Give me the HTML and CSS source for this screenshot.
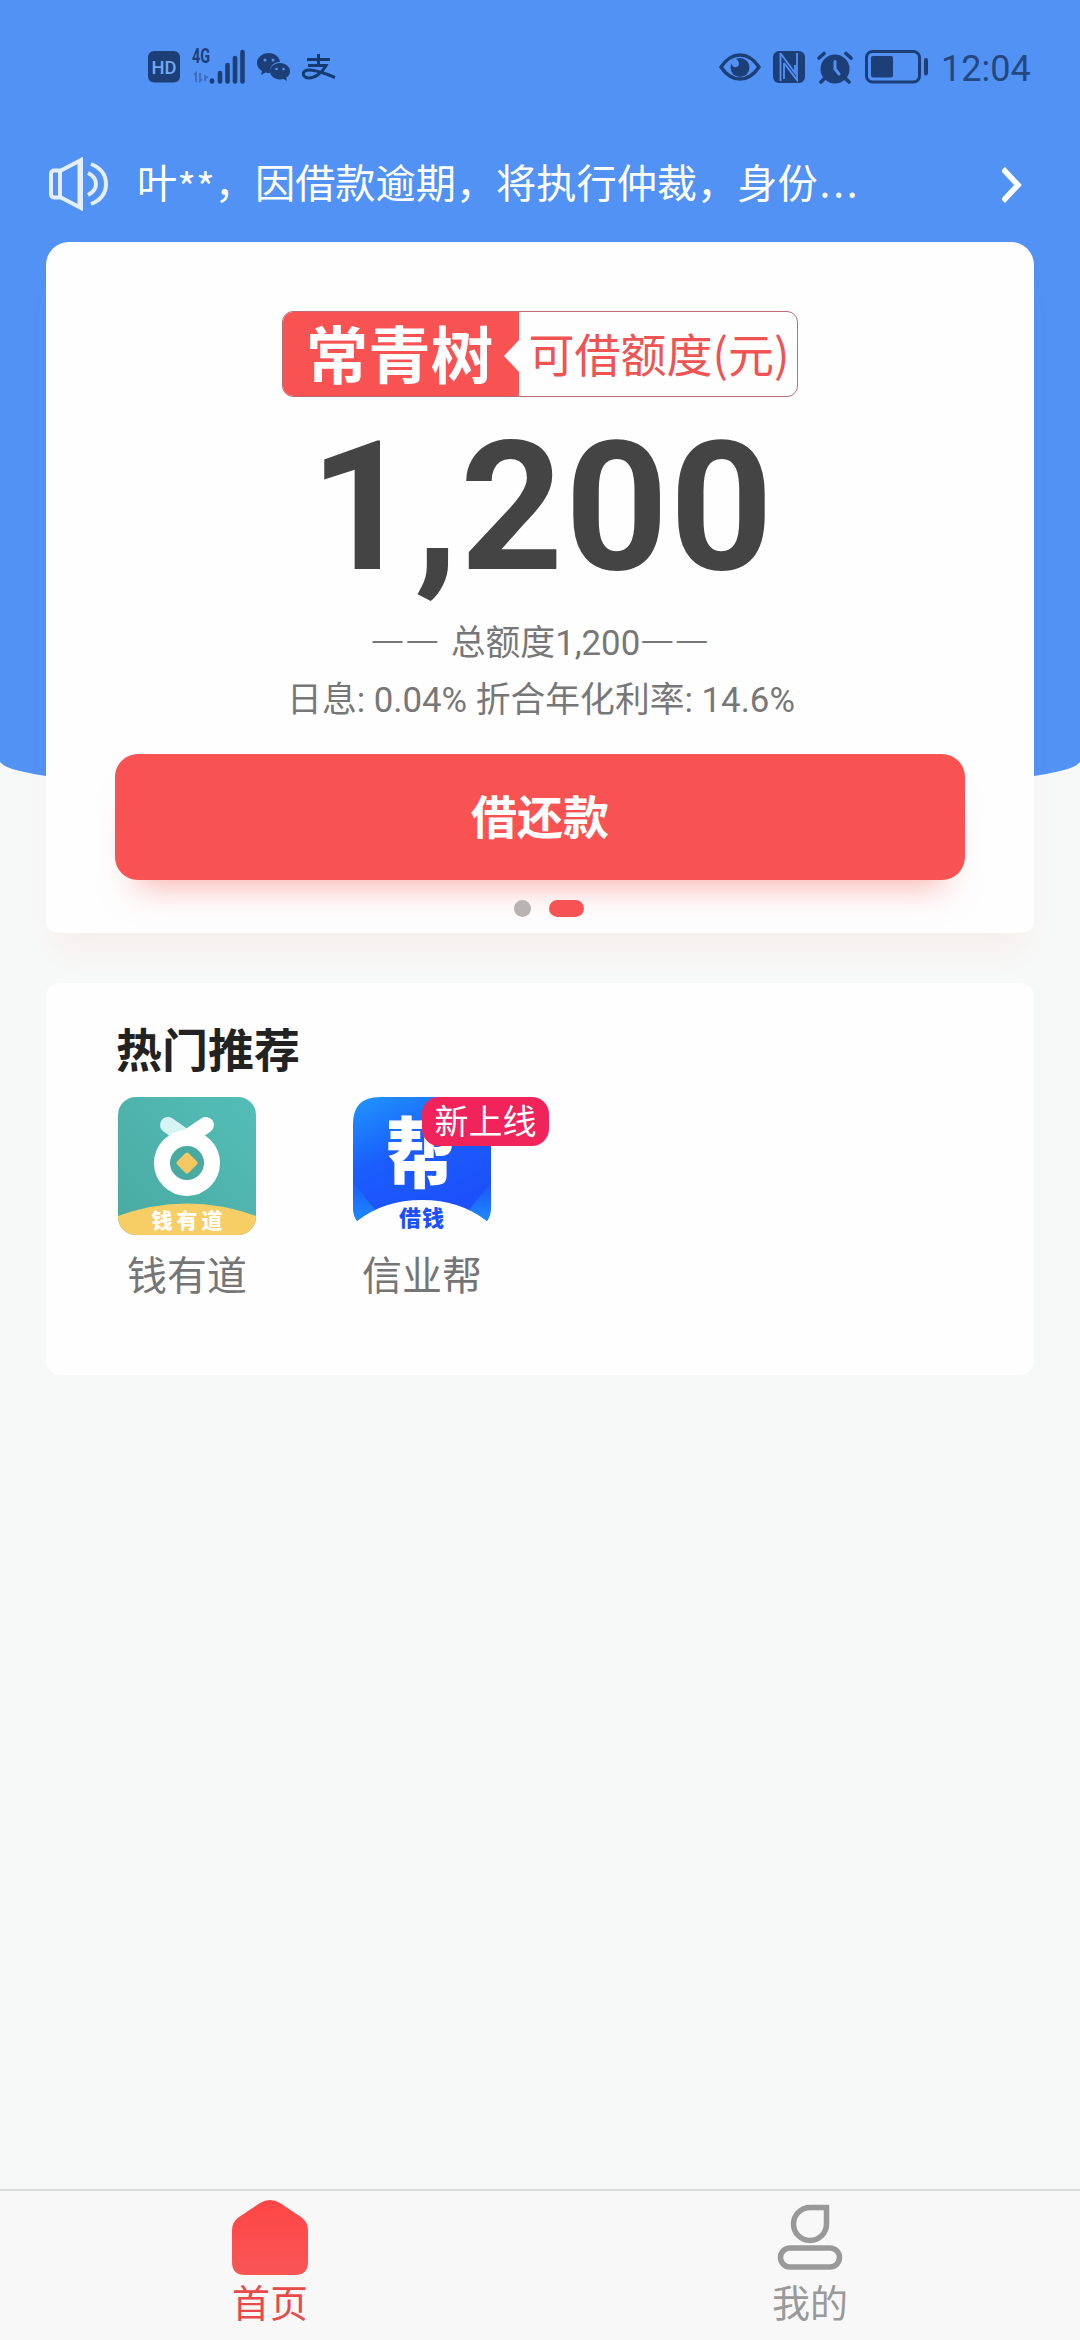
FILE: index.html
```html
<!DOCTYPE html>
<html lang="zh-CN">
<head>
<meta charset="utf-8">
<title>首页</title>
<link rel="stylesheet" href="styles.css">
</head>
<body>
<div class="page">
  <svg class="backdrop" viewBox="0 0 1080 790" aria-hidden="true"><path fill="#5292f5" d="M0 0H1080V762Q1075 768 1060 771Q1048 774 1034 776Q800 790 540 790Q280 790 46 776Q32 774 20 771Q5 768 0 762Z"/></svg>

  <header class="status">
    <div class="status-left">
      <svg width="33" height="32" viewBox="0 0 33 32"><rect width="32" height="31.500" rx="6" fill="#1d3f78"/><text x="16" y="23" text-anchor="middle" class="hd" textLength="25" lengthAdjust="spacingAndGlyphs">HD</text></svg>
      <svg class="signal" width="54" height="40" viewBox="0 -4 54 40"><text x="0" y="13" class="net" textLength="18" lengthAdjust="spacingAndGlyphs">4G</text><g stroke="#1d3f78" stroke-width="4.600" stroke-linecap="round"><path d="M20 30.500V31.500M28 23V31.500M35.500 15V31.500M43 8V31.500M50.500 2V31.500"/></g><path d="M4 32V23l-2 2M8 23v8l2-2M13 25v6M13 28l3-1" stroke="#3d70bd" stroke-width="2" fill="none"/></svg>
      <svg class="wechat" width="34" height="30" viewBox="0 0 34 30"><path fill="#1d3f78" d="M12 1C5 1 0 5.500 0 11c0 3.500 2 6.200 5 8l-1 4 4.500-2.500c1.500.400 3 .500 4.500.500C12 14.500 16.500 10 23 10 22.500 5 18 1 12 1Z"/><path fill="#1d3f78" d="M23 11c-5.800 0-10 3.700-10 8.300S17.200 27.500 23 27.500c1.300 0 2.500-.200 3.500-.500l3.500 2-.800-3.200c2.300-1.500 3.800-3.800 3.800-6.500C33 14.700 28.800 11 23 11Z"/><g fill="#5292f5"><circle cx="8" cy="8" r="1.500"/><circle cx="16" cy="8" r="1.500"/><circle cx="19.500" cy="17" r="1.300"/><circle cx="26.500" cy="17" r="1.300"/></g></svg>
      <svg class="alipay" width="34" height="27" viewBox="0 0 34 27"><g fill="none" stroke="#143b70" stroke-width="3"><path d="M5 5.500H28M16.500 0V11M6 11.500H24C20 19 13 24 7 24C1 24 0 19 3 17C8 14 20 18 33 23.500"/></g></svg>
    </div>
    <div class="status-right">
      <svg width="42" height="28" viewBox="0 0 42 28"><path d="M2 14Q10 2 21 2T40 14Q32 26 21 26T2 14Z" fill="none" stroke="#1d3f78" stroke-width="3.400"/><circle cx="21" cy="14.500" r="9.500" fill="#1d3f78"/><path d="M12 10C13 15 19 16 20 11C20 8 18 6 16 6Z" fill="#5292f5"/></svg>
      <svg width="32" height="32" viewBox="0 0 32 32"><rect width="32" height="32" rx="6" fill="#1d3f78"/><path d="M7.500 2V30M8 3L22 22V14M11 12L24 29V2M11 12V28" fill="none" stroke="#5292f5" stroke-width="1.800"/></svg>
      <svg width="36" height="33" viewBox="0 0 36 33"><circle cx="18" cy="18" r="14.500" fill="#1d3f78"/><path d="M2 7L7 2.500M34 7L29 2.500M7 28L4 31M29 28L32 31" stroke="#1d3f78" stroke-width="3.600" stroke-linecap="round"/><path d="M18 10.500V18L22 23" fill="none" stroke="#5292f5" stroke-width="3" stroke-linecap="round"/></svg>
      <svg class="battery" width="64" height="34" viewBox="0 0 64 34"><rect x="1.500" y="1.500" width="53" height="30.500" rx="6" fill="none" stroke="#1d3f78" stroke-width="3"/><rect x="6" y="6" width="22" height="21.500" rx="2" fill="#1d3f78"/><rect x="59" y="8" width="4" height="17.500" rx="2" fill="#1d3f78"/></svg>
      <span class="clock">12:04</span>
    </div>
  </header>

  <div class="notice">
    <svg width="60" height="54" viewBox="0 0 60 54" fill="none" stroke="#e3efff" stroke-width="4"><path d="M12 13.500H5a3 3 0 0 0-3 3V37.500a3 3 0 0 0 3 3H12M11 13V41M11 14L32 3V51L11 40"/><path d="M31 3V51" stroke-width="5"/><path d="M39 16Q47 20 47 27T39 38M42 7Q57 13 57 27T42 47"/></svg>
    <p class="notice-text">叶<span class="mask">**</span>，因借款逾期，将执行仲裁，身份<span class="more">...</span></p>
    <svg width="20" height="38" viewBox="0 0 20 38" fill="none" stroke="#fff" stroke-width="5.500"><path d="M1 3L16 19L1 35"/></svg>
  </div>

  <main>
    <section class="card loan">
      <div class="tag"><span class="brand">常青树</span><span class="quota">可借额度(元)</span></div>
      <div class="amount">1,200</div>
      <p class="total"><span class="dash">——</span><span class="mid">总额度1,200</span><span class="dash">——</span></p>
      <p class="rate">日息: 0.04% 折合年化利率: 14.6%</p>
      <button class="pay" type="button">借还款</button>
      <div class="dots"><i class="dot"></i><i class="dot on"></i></div>
    </section>

    <section class="card hot">
      <h2>热门推荐</h2>
      <div class="apps">
        <div class="app">
          <svg width="138" height="138" viewBox="0 0 138 138">
            <defs><clipPath id="r1"><rect width="138" height="138" rx="18"/></clipPath><linearGradient id="g1" x1="1" y1="0" x2="0" y2="1"><stop offset="0" stop-color="#54bdb8"/><stop offset="1" stop-color="#49aaa1"/></linearGradient></defs>
            <g clip-path="url(#r1)"><rect width="138" height="138" fill="url(#g1)"/><path d="M0 119Q69 94 138 119V138H0Z" fill="#f7cd66"/></g>
            <path d="M50 28L70 42" stroke="#d7f4f5" stroke-width="16" stroke-linecap="round"/><path d="M88 28L58 48" stroke="#fff" stroke-width="16" stroke-linecap="round"/>
            <circle cx="69" cy="66" r="25" fill="#49aaa1" stroke="#fff" stroke-width="16"/>
            <rect x="61" y="58" width="16" height="16" rx="2" transform="rotate(45 69 66)" fill="#f6c864"/>
            <text x="71" y="131" text-anchor="middle" class="logo-a">钱有道</text>
          </svg>
          <span>钱有道</span>
        </div>
        <div class="app">
          <svg width="138" height="138" viewBox="0 0 138 138">
            <defs><linearGradient id="g2" x1="0" y1="0" x2=".5" y2="1"><stop offset="0" stop-color="#2096fc"/><stop offset=".5" stop-color="#1a5dfc"/><stop offset="1" stop-color="#1c50fa"/></linearGradient><linearGradient id="g3" x1="0" y1="0" x2="0" y2="1"><stop offset="0" stop-color="#1c8cff" stop-opacity="0"/><stop offset="1" stop-color="#1c8cff"/></linearGradient></defs>
            <path d="M27 0H111Q138 0 138 27V110Q138 118 134 124Q107 103 69 103T4 124Q0 118 0 110V27Q0 0 27 0Z" fill="url(#g2)"/><path d="M0 85L22 113Q11 118 4 124Q0 118 0 110ZM138 85L116 113Q127 118 134 124Q138 118 138 110Z" fill="url(#g3)"/>
            <text transform="translate(67 85) scale(1 1.130)" text-anchor="middle" class="logo-b">帮</text>
            <text x="69" y="129" text-anchor="middle" class="logo-c">借钱</text>
          </svg>
          <b class="badge">新上线</b>
          <span>信业帮</span>
        </div>
      </div>
    </section>
  </main>

  <nav class="tabs">
    <a class="tab active"><svg width="76" height="76" viewBox="0 0 76 76"><defs><linearGradient id="g4" x1="0" y1="0" x2="0" y2="1"><stop offset="0" stop-color="#ff4546"/><stop offset="1" stop-color="#f85655"/></linearGradient></defs><path fill="url(#g4)" d="M28 3Q38-3 48 3L69 17Q76 22 76 30V62Q76 75 63 75H13Q0 75 0 62V30Q0 22 7 17Z"/></svg><span>首页</span></a>
    <a class="tab"><svg width="66" height="76" viewBox="0 0 66 76" fill="none" stroke="#999" stroke-width="5.500"><path d="M33 7.500H49.500V24A16.500 16.500 0 1 1 33 7.500Z"/><rect x="3.500" y="48" width="59" height="19" rx="9.500"/></svg><span>我的</span></a>
  </nav>
</div>
</body>
</html>
```
FILE: styles.css
```css
* { box-sizing: border-box; }
body {
  margin: 0;
  background: #f7f8f8;
  font-family: Roboto, "Noto Sans CJK SC", sans-serif;
}
p, h2 { margin: 0; font-weight: 400; }
svg { display: block; flex: none; }

.page {
  position: relative;
  width: 1080px;
  height: 2340px;
  overflow: hidden;
  display: flex;
  flex-direction: column;
}
.backdrop { position: absolute; top: 0; left: 0; width: 1080px; height: 790px; }

.status {
  position: relative;
  height: 134px;
  padding: 0 49px 0 148px;
  display: flex;
  justify-content: space-between;
  align-items: center;
}
.status-left, .status-right { display: flex; align-items: center; }
.status-left { gap: 11px; }
.status-right { gap: 12px; }
.hd { font: 500 19px Roboto, sans-serif; fill: #73a8f5; }
.net { font: 700 20px Roboto, sans-serif; fill: #1d3f78; }
.signal { margin-top: -2px; overflow: visible; }
.clock {
  width: 90px;
  margin-top: 3px;
  font-size: 36px;
  line-height: 40px;
  color: #24487f;
  white-space: nowrap;
}

.notice {
  position: relative;
  height: 108px;
  padding: 0 58px 8px 49px;
  display: flex;
  align-items: flex-start;
  color: #fff;
}
.notice svg { margin-top: 23px; }
.notice svg:last-child { margin-top: 32px; }
.notice-text {
  flex: 1;
  margin: 19px 0 0 28px;
  font: 40.200px/56px "Noto Sans CJK SC", sans-serif;
  white-space: nowrap;
}
.mask { position: relative; top: 5px; }
.more { font-family: "Noto Sans", sans-serif; letter-spacing: 2.800px; margin-left: 2px; }

main {
  position: relative;
  padding: 0 46px;
  display: flex;
  flex-direction: column;
  gap: 50px;
}
.card { background: #fefefe; }
.loan {
  height: 691px;
  border-radius: 23px 23px 12px 12px;
  padding-top: 69px;
  display: flex;
  flex-direction: column;
  align-items: center;
  box-shadow: 0 26px 32px -12px rgba(245, 130, 90, .07);
}
.tag {
  width: 516px;
  height: 86px;
  display: flex;
  border: 1px solid #bd6c76;
  border-radius: 11px;
}
.brand {
  position: relative;
  width: 236px;
  padding-right: 3px;
  border-radius: 10px 0 0 10px;
  background: #f95252;
  color: #fff;
  text-align: center;
  font: 700 62.500px/80px "Noto Sans CJK SC", sans-serif;
}
.brand::after {
  content: "";
  position: absolute;
  right: 0;
  top: 28px;
  border: solid transparent;
  border-width: 16px 15px 16px 0;
  border-right-color: #fff;
}
.quota {
  flex: 1;
  padding-left: 2px;
  text-align: center;
  color: #ef5353;
  font: 46px/80px "Noto Sans CJK SC", sans-serif;
  white-space: nowrap;
}
.amount {
  height: 210px;
  font: 700 180px/210px Roboto, sans-serif;
  letter-spacing: 1.500px;
  color: #444;
  margin: 6px 0 0 4px;
}
.total, .rate { color: #777; font-size: 34.800px; white-space: nowrap; }
.total {
  margin: -1px 0 0 4px;
  height: 56px;
  display: flex;
  align-items: center;
}
.dash { font: 30px "Liberation Sans", sans-serif; letter-spacing: 4.600px; }
.mid { margin: 0 2px 0 9px; }
.rate { margin: 4px 0 0 2px; height: 56px; line-height: 56px; }
.pay {
  margin: 26px 0 0;
  width: 850px;
  height: 126px;
  flex: none;
  border: 0;
  border-radius: 23px;
  background: #f95252;
  color: #fff;
  font: 700 46px/120px "Noto Sans CJK SC", sans-serif;
  padding: 0 0 6px;
  box-shadow: 0 26px 34px -22px rgba(249, 82, 82, .5);
}
.dots { margin: 20px 0 0 17px; display: flex; gap: 18px; }
.dot { width: 17px; height: 17px; border-radius: 9px; background: #b8b2b1; }
.dot.on { width: 35px; background: #f75354; }

.hot { height: 392px; border-radius: 14px; padding: 30px 70px 0 72px; }
.hot h2 {
  margin-left: -2px;
  font: 700 46px/68px "Noto Sans CJK SC", sans-serif;
  color: #222;
  padding-bottom: 16px;
}
.apps { display: flex; gap: 97px; }
.app {
  position: relative;
  width: 138px;
  display: flex;
  flex-direction: column;
  align-items: center;
}
.app span {
  margin-top: 8px;
  font: 40px/60px "Noto Sans CJK SC", sans-serif;
  color: #757575;
}
.badge {
  position: absolute;
  left: 69px;
  top: 0;
  width: 127px;
  height: 49px;
  border-radius: 17px;
  background: #f0235a;
  color: #fff;
  text-align: center;
  font: 400 34px/46px "Noto Sans CJK SC", sans-serif;
}
.logo-a, .logo-b, .logo-c { font-family: "Noto Sans CJK SC", sans-serif; font-weight: 900; }
.logo-a { font-size: 21px; letter-spacing: 4px; fill: #fff; }
.logo-b { font-size: 68px; fill: #fff; }
.logo-c { font-size: 22px; letter-spacing: 1px; fill: #1c50fa; }

.tabs {
  margin-top: auto;
  height: 151px;
  border-top: 2px solid #dadcdc;
  background: #f8f8f8;
  display: flex;
}
.tab {
  flex: 1;
  display: flex;
  flex-direction: column;
  align-items: center;
  padding-top: 9px;
  color: #999;
  font: 38px/50px "Noto Sans CJK SC", sans-serif;
}
.tab.active { color: #e84a4c; }
```
